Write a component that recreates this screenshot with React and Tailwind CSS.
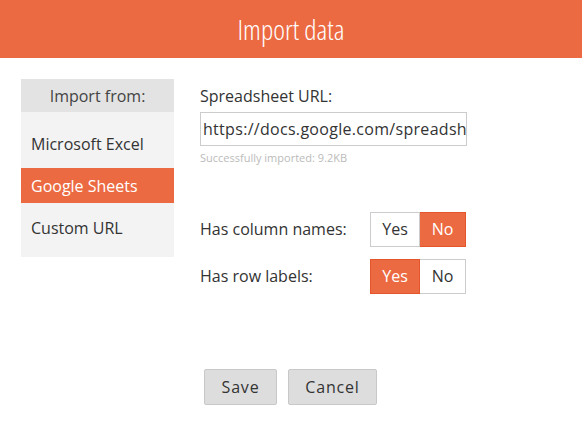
import React from "react";

function Toggle({ yes }) {
  const on = "bg-[#ec6a42] text-white border-[#e5552c]";
  const off = "bg-white text-[#333] border-[#cccccc]";
  return (
    <div className="flex h-[35px]">
      <div className={`w-[50px] flex items-center justify-center border ${yes ? on : off}`}>Yes</div>
      <div className={`w-[46px] flex items-center justify-center border border-l-0 ${yes ? off : on}`}>No</div>
    </div>
  );
}

export default function App() {
  return (
    <div className="w-[582px] h-[432px] bg-white text-[16px] text-[#333]" style={{ fontFamily: '"Open Sans", sans-serif' }}>
      <div className="h-[58px] bg-[#ec6a42] flex items-center justify-center">
        <span className="text-white text-[28px] font-light" style={{ fontStretch: "75%", fontFamily: '"Open Sans", sans-serif' }}>Import data</span>
      </div>
      <div className="flex pt-[21px]">
        <div className="ml-[21px] w-[153px]">
          <div className="h-[33px] bg-[#e3e3e3] flex items-center justify-center text-[#444]">Import from:</div>
          <div className="bg-[#f3f3f3] pt-[14px] pb-[12px] flex flex-col gap-[7px]">
            <div className="h-[35px] flex items-center px-[10px]">Microsoft Excel</div>
            <div className="h-[35px] flex items-center px-[10px] bg-[#ec6a42] text-white">Google Sheets</div>
            <div className="h-[35px] flex items-center px-[10px]">Custom URL</div>
          </div>
        </div>
        <div className="ml-[26px] flex flex-col">
          <div className="h-[33px] flex items-center">Spreadsheet URL:</div>
          <div className="w-[267px] h-[34px] border border-[#cccccc] overflow-hidden whitespace-nowrap flex items-center pl-[2px] tracking-[0.3px]">https://docs.google.com/spreadsheets</div>
          <div className="text-[11px] text-[#bbbbbb] mt-[4px]">Successfully imported: 9.2KB</div>
          <div className="flex items-center mt-[45px]">
            <div className="w-[170px]">Has column names:</div>
            <Toggle yes={false} />
          </div>
          <div className="flex items-center mt-[12px]">
            <div className="w-[170px]">Has row labels:</div>
            <Toggle yes={true} />
          </div>
        </div>
      </div>
      <div className="flex justify-center gap-[11px] mt-[75px] pr-[1px]">
        <button className="w-[73px] h-[36px] bg-[#dddddd] border border-[#c8c8c8] rounded-[2px] tracking-[0.8px] text-[#333]">Save</button>
        <button className="w-[89px] h-[36px] bg-[#dddddd] border border-[#c8c8c8] rounded-[2px] tracking-[0.8px] text-[#333]">Cancel</button>
      </div>
    </div>
  );
}
